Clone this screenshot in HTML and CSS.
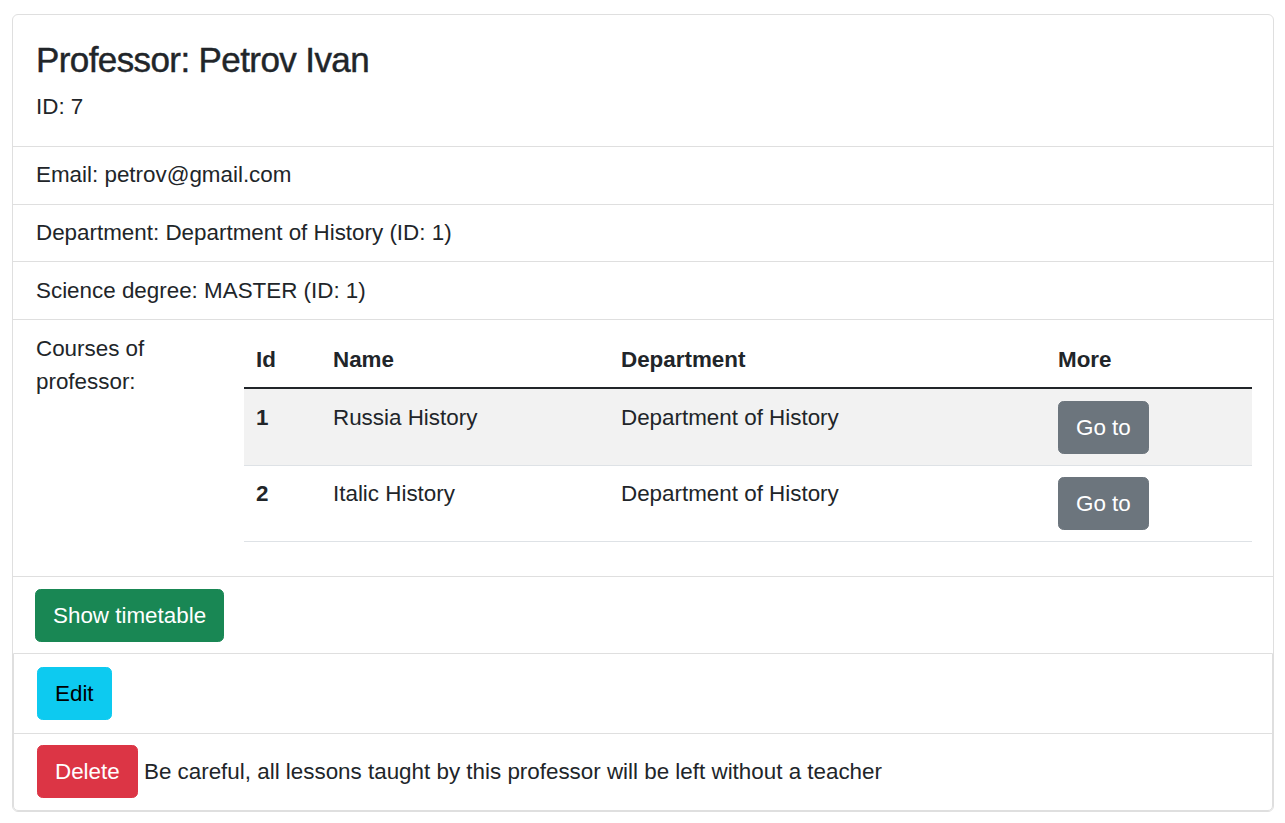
FILE: index.html
```html
<!DOCTYPE html>
<html lang="en">
<head>
<meta charset="utf-8">
<title>Professor: Petrov Ivan</title>
<link rel="stylesheet" href="styles.css">
</head>
<body>
<div class="card">
  <div class="card-body">
    <h3 class="title">Professor: Petrov Ivan</h3>
    <p class="card-text">ID: 7</p>
  </div>
  <ul class="list">
    <li class="item">Email: petrov@gmail.com</li>
    <li class="item">Department: Department of History (ID: 1)</li>
    <li class="item">Science degree: MASTER (ID: 1)</li>
    <li class="item courses">
      <div class="courses-label">Courses of professor:</div>
      <table class="table">
        <thead>
          <tr>
            <th class="c-id">Id</th>
            <th class="c-name">Name</th>
            <th class="c-dept">Department</th>
            <th class="c-more">More</th>
          </tr>
        </thead>
        <tbody>
          <tr class="striped">
            <th>1</th>
            <td>Russia History</td>
            <td>Department of History</td>
            <td><a class="btn btn-secondary" href="#">Go to</a></td>
          </tr>
          <tr>
            <th>2</th>
            <td>Italic History</td>
            <td>Department of History</td>
            <td><a class="btn btn-secondary" href="#">Go to</a></td>
          </tr>
        </tbody>
      </table>
    </li>
  </ul>
  <div class="timetable">
    <a class="btn btn-success" href="#">Show timetable</a>
  </div>
  <div class="actions">
    <div class="action action-edit">
      <a class="btn btn-info" href="#">Edit</a>
    </div>
    <div class="action action-delete">
      <button class="btn btn-danger" type="button">Delete</button> Be careful, all lessons taught by this professor will be left without a teacher
    </div>
  </div>
</div>
</body>
</html>
```

FILE: styles.css
```css
* {
  box-sizing: border-box;
}

html, body {
  background: #ffffff;
}

body {
  margin: 0;
  padding: 14px 11px 0 12px;
  font-family: "Liberation Sans", Arial, sans-serif;
  font-size: 22.4px;
  line-height: 1.5;
  color: #212529;
}

.card {
  width: 1262px;
  border: 1px solid #dfdfdf;
  border-radius: 6px;
  background: #fff;
}

.card-body {
  padding: 23px 23px 22px;
}

.title {
  margin: 0 0 8px;
  font-size: 35px;
  font-weight: 500;
  line-height: 1.26;
  letter-spacing: -0.6px;
  -webkit-text-stroke: 0.45px #212529;
}

.card-text {
  margin: 0;
}

.list {
  list-style: none;
  margin: 0;
  padding: 0;
}

.item {
  padding: 11.6px 23px;
  border-top: 1px solid #dfdfdf;
}

.courses {
  display: grid;
  grid-template-columns: 208px 1008px;
  padding-right: 21px;
}

.table {
  width: 1008px;
  border-collapse: collapse;
  margin-bottom: 22.4px;
  table-layout: fixed;
}

.c-id { width: 77px; }
.c-name { width: 288px; }
.c-dept { width: 437px; }
.c-more { width: 206px; }

.table th,
.table td {
  padding: 11.3px 12px;
  text-align: left;
  vertical-align: top;
  border-bottom: 1px solid #dee2e6;
}

.table thead th {
  padding-top: 11px;
  padding-bottom: 11px;
  border-bottom: 2px solid #212529;
  font-weight: 700;
}

.table tbody th {
  font-weight: 700;
}

.striped th,
.striped td {
  background: #f2f2f2;
}

.btn {
  display: inline-block;
  padding: 9px 17px;
  border: 1px solid transparent;
  border-radius: 5.6px;
  font-family: inherit;
  font-size: 22.4px;
  line-height: 33px;
  text-decoration: none;
  vertical-align: baseline;
  cursor: pointer;
}

.btn-secondary {
  background: #6c757d;
  border-color: #6c757d;
  color: #fff;
}

.btn-success {
  background: #198754;
  border-color: #198754;
  color: #fff;
}

.btn-info {
  background: #0dcaf0;
  border-color: #0dcaf0;
  color: #000;
}

.btn-danger {
  background: #dc3545;
  border-color: #dc3545;
  color: #fff;
}

.timetable {
  padding: 12px 22px 11px;
  border-top: 1px solid #dfdfdf;
}

.actions {
  border: 1px solid #dfdfdf;
  border-radius: 0 0 5px 5px;
}

.action {
  padding: 0 23px;
}

.action-edit {
  padding-top: 13px;
  padding-bottom: 13px;
}

.action-delete {
  padding-top: 11px;
  padding-bottom: 12px;
  border-top: 1px solid #dfdfdf;
}
```
